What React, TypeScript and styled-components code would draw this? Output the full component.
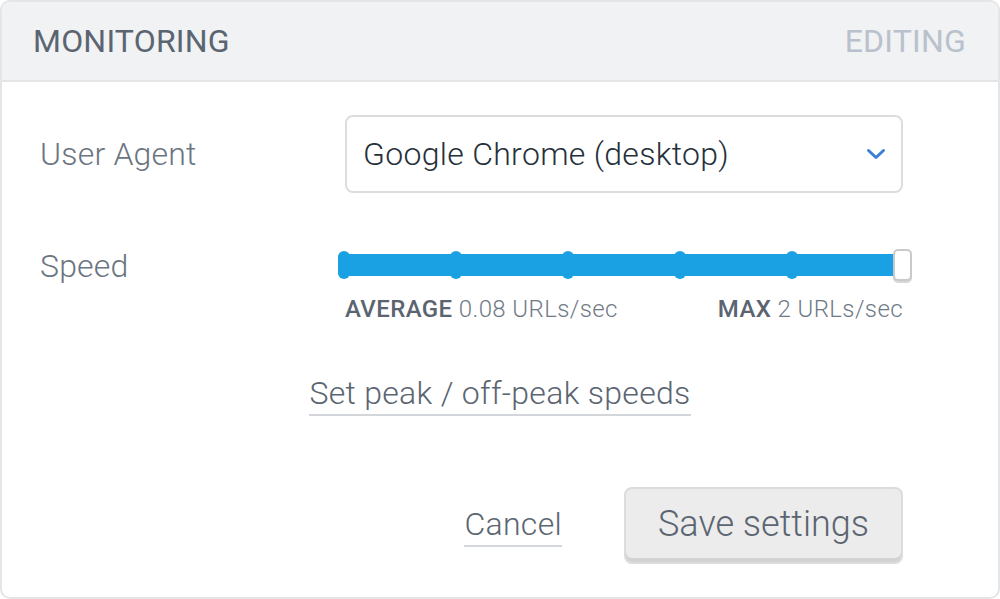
import React from 'react'
import styled, { createGlobalStyle } from 'styled-components'

const GlobalStyle = createGlobalStyle`
  html, body {
    margin: 0;
    padding: 0;
    background: #ffffff;
    font-family: Roboto, 'Liberation Sans', sans-serif;
  }
`

const Card = styled.div`
  box-sizing: border-box;
  width: 1000px;
  height: 599px;
  border: 2px solid #e4e5e7;
  border-radius: 10px;
  overflow: hidden;
  background: #fff;
  display: flex;
  flex-direction: column;
`

const Header = styled.header`
  display: flex;
  align-items: center;
  justify-content: space-between;
  height: 78px;
  padding: 0 32px 0 31px;
  background: #f1f2f4;
  border-bottom: 2px solid #e4e5e7;
`

const HeaderTitle = styled.h2<{ $muted?: boolean }>`
  margin: 0;
  font-size: 32px;
  font-weight: 400;
  letter-spacing: 0.2px;
  color: ${(p) => (p.$muted ? '#b9c1cc' : '#5b6571')};
`

const Body = styled.div`
  flex: 1;
  display: flex;
  flex-direction: column;
  padding: 33px 95px 0 38px;
`

const Row = styled.div`
  display: grid;
  grid-template-columns: 305px 1fr;
  align-items: start;
`

const Label = styled.div`
  font-size: 32px;
  letter-spacing: 0.2px;
  color: #6b7581;
  font-weight: 300;
  line-height: 78px;
`

const Select = styled.div`
  box-sizing: border-box;
  height: 78px;
  display: flex;
  align-items: center;
  justify-content: space-between;
  padding: 0 15px 0 16px;
  border: 2px solid #dcdddf;
  border-radius: 8px;
  font-size: 32px;
  letter-spacing: 0.3px;
  font-weight: 300;
  color: #25303b;
`

const SpeedRow = styled(Row)`
  margin-top: 58px;
`

const SpeedLabel = styled(Label)`
  line-height: 30px;
`

const SliderBlock = styled.div`
  display: flex;
  flex-direction: column;
`

const Track = styled.div`
  position: relative;
  height: 28px;
  margin: 0 -9px 0 -7px;
  display: flex;
  align-items: center;
`

const Bar = styled.div`
  flex: 1;
  height: 22px;
  margin-right: 10px;
  background: #1aa1e3;
  border-radius: 4px;
`

const Tick = styled.span`
  position: absolute;
  top: 0;
  width: 12px;
  height: 28px;
  margin-left: -6px;
  border-radius: 6px;
  background: #1aa1e3;
`

const Thumb = styled.span`
  position: absolute;
  right: 0;
  top: -2px;
  box-sizing: border-box;
  width: 19px;
  height: 32px;
  background: #fff;
  border: 2px solid #c9cacc;
  border-radius: 5px;
  box-shadow: 0 2px 0 #d6d7d9;
`

const Readout = styled.div`
  display: flex;
  justify-content: space-between;
  margin-top: 16px;
  font-size: 24px;
  letter-spacing: 0.4px;
  color: #707a86;
  font-weight: 300;
`

const Strong = styled.span`
  font-weight: 500;
  color: #5b6571;
`

const LinkRow = styled.div`
  display: flex;
  justify-content: center;
  margin: 51px -95px 0 -38px;
`

const TextLink = styled.a`
  font-size: 32px;
  letter-spacing: 0.3px;
  color: #5b6571;
  font-weight: 300;
  text-decoration: none;
  border-bottom: 2px solid #d3d6da;
  padding-bottom: 2px;
  cursor: pointer;
`

const Actions = styled.div`
  display: flex;
  justify-content: flex-end;
  align-items: center;
  gap: 62px;
  margin-top: 71px;
`

const Button = styled.button`
  box-sizing: border-box;
  width: 279px;
  height: 77px;
  font-family: inherit;
  font-size: 36px;
  font-weight: 300;
  color: #5b6571;
  background: #ececec;
  border: 2px solid #dcdcdc;
  border-radius: 8px;
  box-shadow: inset 0 -4px 0 #d2d2d2;
  padding-bottom: 4px;
`

const Chevron = () => (
  <svg width="20" height="12" viewBox="0 0 20 12">
    <path d="M2.5 2.5 L10 9.5 L17.5 2.5" fill="none" stroke="#3b7fd6" strokeWidth="3" strokeLinecap="round" strokeLinejoin="round" />
  </svg>
)

const ticks = [0, 1, 2, 3, 4]

export default function App() {
  return (
    <>
      <GlobalStyle />
      <Card>
        <Header>
          <HeaderTitle>MONITORING</HeaderTitle>
          <HeaderTitle $muted>EDITING</HeaderTitle>
        </Header>
        <Body>
          <Row>
            <Label>User Agent</Label>
            <Select>
              <span>Google Chrome (desktop)</span>
              <Chevron />
            </Select>
          </Row>
          <SpeedRow>
            <SpeedLabel>Speed</SpeedLabel>
            <SliderBlock>
              <Track>
                <Bar />
                {ticks.map((i) => (
                  <Tick key={i} style={{ left: `${6 + i * 112}px` }} />
                ))}
                <Thumb />
              </Track>
              <Readout>
                <span>
                  <Strong>AVERAGE</Strong> 0.08 URLs/sec
                </span>
                <span>
                  <Strong>MAX</Strong> 2 URLs/sec
                </span>
              </Readout>
            </SliderBlock>
          </SpeedRow>
          <LinkRow>
            <TextLink>Set peak / off-peak speeds</TextLink>
          </LinkRow>
          <Actions>
            <TextLink>Cancel</TextLink>
            <Button>Save settings</Button>
          </Actions>
        </Body>
      </Card>
    </>
  )
}
